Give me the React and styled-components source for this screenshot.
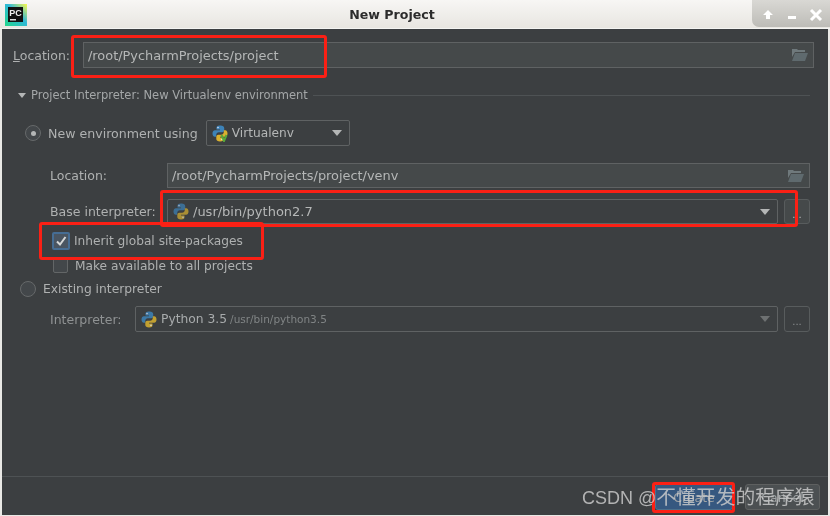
import React from "react";
import styled, { createGlobalStyle } from "styled-components";

const Global = createGlobalStyle`
  html, body { margin: 0; padding: 0; background: #e8e6e2; }
  #root { width: 830px; height: 516px; overflow: hidden; }
`;
const Window = styled.div`
  position: relative; width: 830px; height: 516px; display: flex; flex-direction: column;
  font-family: "DejaVu Sans", sans-serif; font-size: 13px; color: #afb1b1; filter: blur(0.45px);
  background: #e9e8e5; overflow: hidden;
`;
const TitleBar = styled.div`
  position: relative; height: 29px; flex: none; display: flex; align-items: center; justify-content: center;
  background: linear-gradient(#f7f6f4, #e8e6e1); border-bottom: 1px solid #f4f4f2; box-sizing: border-box;
`;
const Title = styled.div`font-weight: 700; font-size: 12.6px; color: #2c2c2c; margin-top: 1px; margin-right: 46px;`;
const AppLogo = styled.svg`position: absolute; left: 5px; top: 4px;`;
const Controls = styled.div`
  position: absolute; right: 0; top: 0; width: 78px; height: 27px; box-sizing: border-box; display: flex; align-items: center;
  gap: 11px; padding: 3px 0 0 9px; background: linear-gradient(#d9d8d4, #bdbcb7); border-bottom-left-radius: 7px;
`;
const Body = styled.div`
  flex: 1; min-height: 0; margin: 0 2px 1px 2px; background: #3c3f41; display: flex; flex-direction: column;
`;
const Main = styled.div`flex: 1; padding: 13px 14px 0 11px;`;
const Row = styled.div`
  display: flex; align-items: center; height: ${p => p.$h || 26}px; margin-top: ${p => p.$mt || 0}px;
  padding-left: ${p => p.$pl || 0}px; padding-right: ${p => p.$pr || 0}px;
`;
const Label = styled.span`width: ${p => p.$w}px; flex: none; font-size: 12.5px; color: ${p => p.$dim ? "#8f9293" : "#afb1b1"};`;
const Field = styled.div`
  flex: 1; height: 100%; box-sizing: border-box; display: flex; align-items: center; justify-content: space-between;
  padding: 0 5px 0 4px; background: #45494a; border: 1px solid #5f6263; color: #b5b7b7; font-size: 12.9px;
`;
const Section = styled.div`display: flex; align-items: center; height: 20px; margin: 17px 4px 0 5px; gap: 5px; color: #a4a7a8; font-size: 11.5px;`;
const Tri = styled.i`width: 0; height: 0; border-style: solid; border-width: 5px 4px 0 4px; border-color: ${p => p.$c || "#b4b6b6"} transparent transparent;`;
const SectionLine = styled.div`flex: 1; height: 1px; background: #4e5254;`;
const Radio = styled.span`
  width: 16px; height: 16px; flex: none; border-radius: 50%; box-sizing: border-box; border: 1px solid #66696a; background: #43474a;
  display: flex; align-items: center; justify-content: center; margin-right: ${p => p.$mr}px;
  &::after { content: ""; width: 5px; height: 5px; border-radius: 50%; background: ${p => p.$on ? "#b4b6b6" : "transparent"}; }
`;
const RadioText = styled.span`font-size: ${p => p.$fs}px;`;
const Combo = styled.div`
  box-sizing: border-box; height: 100%; ${p => p.$w ? `width: ${p.$w}px;` : "flex: 1;"} margin-left: ${p => p.$ml || 0}px; display: flex; align-items: center; gap: 4px;
  padding: 0 7px 0 5px; border: 1px solid #5f6263; border-radius: 2px; color: ${p => p.$dim ? "#a8abac" : "#b5b7b7"}; font-size: ${p => p.$fs || 13}px;
`;
const Spacer = styled.span`flex: 1;`;
const Small = styled.small`font-size: 10.5px; color: #808485; margin-left: -1px;`;
const Dots = styled.div`
  width: 26px; height: 100%; flex: none; box-sizing: border-box; margin-left: 6px; border: 1px solid #585c5d; border-radius: 3px;
  background: ${p => p.$on ? "#45494a" : "transparent"}; display: flex; justify-content: center; align-items: center; padding-top: 5px; font-size: 10px; color: ${p => p.$on ? "#b9bbbb" : "#8b8e8f"};
`;
const CheckRow = styled.div`
  display: flex; align-items: center; font-size: 12.2px; height: ${p => p.$h}px; margin-top: ${p => p.$mt}px;
  padding-left: ${p => p.$pl}px; gap: ${p => p.$gap}px;
`;
const Check = styled.span`
  box-sizing: border-box; flex: none; width: ${p => p.$on ? 18 : 15}px; height: ${p => p.$on ? 18 : 15}px; border-radius: 2px;
  border: ${p => p.$on ? "2px solid #466d94" : "1px solid #636667"}; background: ${p => p.$on ? "#4a5561" : "#43474a"};
  display: flex; align-items: center; justify-content: center;
`;
const Footer = styled.div`
  flex: none; box-sizing: border-box; height: 39px; border-top: 1px solid #4e5254; display: flex; justify-content: flex-end; align-items: flex-start; gap: 12px; padding: 7px 8px 0 0;
`;
const Btn = styled.div`
  box-sizing: border-box; height: 26px; width: ${p => p.$w}px; border-radius: 3px; display: flex; align-items: center; justify-content: center; font-size: 12.5px;
  background: ${p => p.$primary ? "#365880" : "#4c5052"}; border: 1px solid ${p => p.$primary ? "#4c708c" : "#5e6060"}; color: #9fa3a5;
`;
const Mark = styled.div`
  position: absolute; left: ${p => p.$x}px; top: ${p => p.$y}px; width: ${p => p.$w}px; height: ${p => p.$h}px; box-sizing: border-box;
  border: 3px solid #fb2015; border-radius: 3px; pointer-events: none;
`;
const Watermark = styled.div`
  position: absolute; left: 582px; top: 485px; font-size: 18px; line-height: 24px; white-space: nowrap; color: rgba(205,205,205,.82);
  font-family: "Liberation Sans", "Noto Sans CJK SC", sans-serif;
`;
const WatermarkCjk = styled.span`font-size: 19.8px;`;

const Folder = () => (
  <svg width="16" height="14" viewBox="0 0 16 14">
    <path d="M0 1h5l1 1h7v2H3L0 9z" fill="#6f797c" />
    <path d="M3 5h13l-3 8H0z" fill="#5f6a6e" />
  </svg>
);
const Python = ({ v, dim }) => (
  <svg width="16" height="17" viewBox="0 0 16 17" style={{ flex: "none", opacity: dim ? 0.85 : v ? 1 : 0.7 }}>
    <path d="M8 0.5C5 0.5 4.5 1.6 4.5 3v1.6H8v.7H3C1.3 5.3.5 6.6.5 8.5s.8 3.3 2.3 3.3h1.4V10c0-1.5 1.2-2.7 2.7-2.7h3.3c1.1 0 2-.9 2-2V3c0-1.4-1.4-2.5-3.7-2.5z" fill="#3d83b8" />
    <path d="M8 16.5c3 0 3.5-1.1 3.5-2.5v-1.6H8v-.7h5c1.7 0 2.5-1.3 2.5-3.2s-.8-3.3-2.3-3.3h-1.4V7c0 1.5-1.2 2.7-2.7 2.7H6.3c-1.1 0-2 .9-2 2V14c0 1.4 1.4 2.5 3.7 2.5z" fill="#d9b12f" />
    <circle cx="6" cy="2.6" r=".8" fill="#dde" />
    <circle cx="10" cy="14.4" r=".8" fill="#eee" />
    {v && <path d="M9.5 10l2.5 6 2.5-6" stroke="#57a83a" strokeWidth="2" fill="none" />}
  </svg>
);
const Arrow = ({ dim }) => <Tri $c={dim ? "#6e7172" : "#b4b6b6"} style={{ borderWidth: "6px 5px 0 5px" }} />;

export default function App() {
  return (
    <Window>
      <Global />
      <TitleBar>
        <AppLogo width="22" height="22" viewBox="0 0 22 22">
          <defs>
            <linearGradient id="g" x1="0" y1="1" x2="1" y2="0">
              <stop offset="0" stopColor="#21d789" />
              <stop offset=".55" stopColor="#2fb8d8" />
              <stop offset="1" stopColor="#fcf84a" />
            </linearGradient>
          </defs>
          <rect width="22" height="22" fill="url(#g)" />
          <rect x="3" y="3" width="15" height="15" fill="#111" />
          <text x="4.2" y="11.5" fontSize="9" fontWeight="700" fill="#eee" fontFamily="Liberation Sans">PC</text>
          <rect x="5" y="15" width="6" height="1.5" fill="#ddd" />
        </AppLogo>
        <Title>New Project</Title>
        <Controls>
          <svg width="14" height="14" viewBox="0 0 14 14"><path d="M7 2l5 5H9v4H5V7H2z" fill="#fff" /></svg>
          <svg width="12" height="14" viewBox="0 0 12 14"><rect x="2" y="8" width="8" height="3" fill="#fff" /></svg>
          <svg width="14" height="14" viewBox="0 0 14 14"><path d="M2 2l10 10M12 2L2 12" stroke="#fff" strokeWidth="3" /></svg>
        </Controls>
      </TitleBar>
      <Body>
        <Main>
          <Row>
            <Label $w={70}><u>L</u>ocation:</Label>
            <Field>/root/PycharmProjects/project<Folder /></Field>
          </Row>
          <Section><Tri />Project Interpreter: New Virtualenv environment<SectionLine /></Section>
          <Row $mt={15} $pl={12}>
            <Radio $on $mr={7} />
            <RadioText $fs={12.6}>New environment using</RadioText>
            <Combo $w={144} $ml={8} $fs={12.2}><Python v />Virtualenv<Spacer /><Arrow /></Combo>
          </Row>
          <Row $mt={17} $h={25} $pl={37} $pr={4}>
            <Label $w={117}>Location:</Label>
            <Field>/root/PycharmProjects/project/venv<Folder /></Field>
          </Row>
          <Row $mt={11} $h={25} $pl={37} $pr={4}>
            <Label $w={117}>Base interpreter:</Label>
            <Combo><Python />/usr/bin/python2.7<Spacer /><Arrow /></Combo>
            <Dots $on>...</Dots>
          </Row>
          <CheckRow $h={18} $mt={8} $pl={39} $gap={4}>
            <Check $on>
              <svg width="12" height="12" viewBox="0 0 12 12"><path d="M2 6.5l3 3L10.5 2" stroke="#d6d8d8" strokeWidth="2" fill="none" /></svg>
            </Check>
            <span>Inherit global site-packages</span>
          </CheckRow>
          <CheckRow $h={15} $mt={8} $pl={40} $gap={7}>
            <Check />
            <span>Make available to all projects</span>
          </CheckRow>
          <Row $mt={8} $h={16} $pl={7}>
            <Radio $mr={7} />
            <RadioText $fs={12.3}>Existing interpreter</RadioText>
          </Row>
          <Row $mt={9} $pl={37} $pr={4}>
            <Label $w={85} $dim>Interpreter:</Label>
            <Combo $dim $fs={12.3}><Python dim /><span>Python 3.5</span><Small>/usr/bin/python3.5</Small><Spacer /><Arrow dim /></Combo>
            <Dots>...</Dots>
          </Row>
        </Main>
        <Footer>
          <Btn $primary $w={78}>Create</Btn>
          <Btn $w={75}>Cancel</Btn>
        </Footer>
      </Body>
      <Mark $x={71} $y={35} $w={256} $h={43} />
      <Mark $x={160} $y={190} $w={638} $h={37} />
      <Mark $x={39} $y={222} $w={225} $h={38} />
      <Mark $x={652} $y={482} $w={83} $h={31} />
      <Watermark>CSDN @<WatermarkCjk>不懂开发的程序猿</WatermarkCjk></Watermark>
    </Window>
  );
}
